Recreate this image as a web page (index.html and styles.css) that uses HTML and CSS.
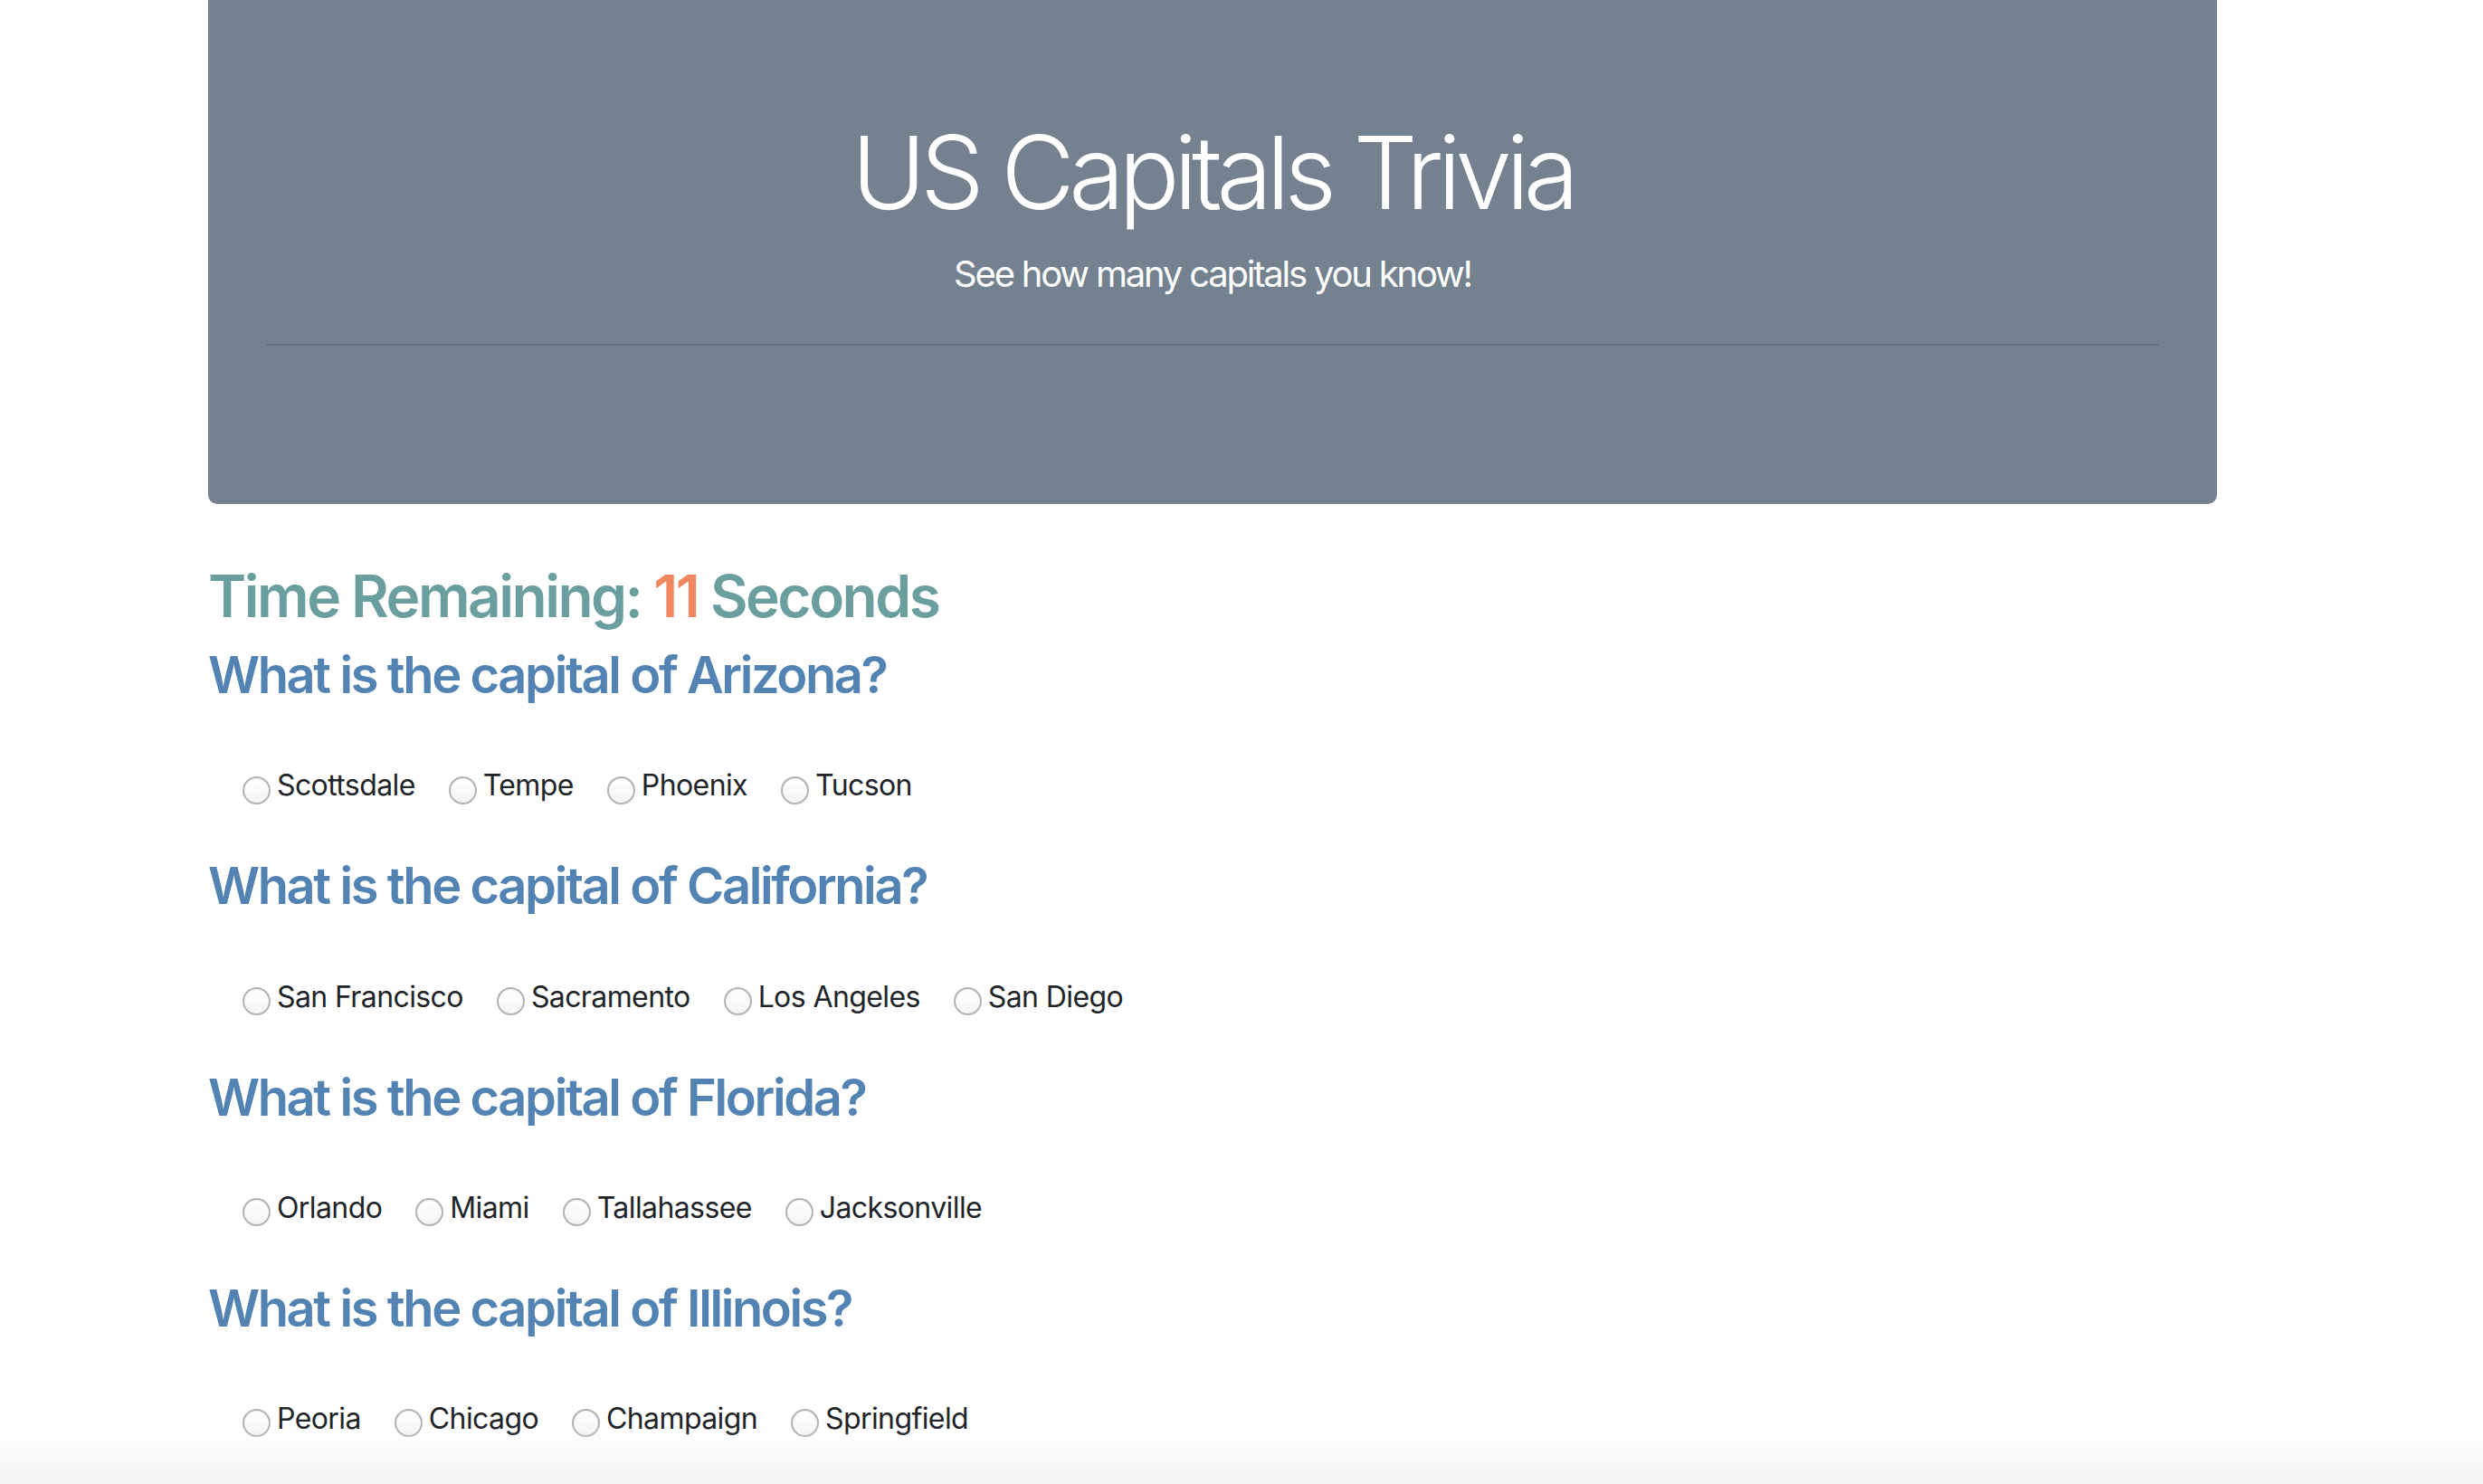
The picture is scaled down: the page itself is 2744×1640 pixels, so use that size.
FILE: index.html
```html
<!DOCTYPE html>
<html lang="en">
<head>
<meta charset="utf-8">
<title>US Capitals Trivia</title>
<link rel="stylesheet" href="styles.css">
</head>
<body>
<div class="container">
  <header class="jumbotron">
    <h1 class="title">US Capitals Trivia</h1>
    <p class="lead">See how many capitals you know!</p>
    <hr class="divider">
  </header>

  <h2 class="timer">Time Remaining: <span class="count">11</span> Seconds</h2>

  <section class="question">
    <h3 class="prompt">What is the capital of Arizona?</h3>
    <div class="options">
      <label class="option"><input type="radio" name="q1"><span>Scottsdale</span></label>
      <label class="option"><input type="radio" name="q1"><span>Tempe</span></label>
      <label class="option"><input type="radio" name="q1"><span>Phoenix</span></label>
      <label class="option"><input type="radio" name="q1"><span>Tucson</span></label>
    </div>
  </section>

  <section class="question">
    <h3 class="prompt">What is the capital of California?</h3>
    <div class="options">
      <label class="option"><input type="radio" name="q2"><span>San Francisco</span></label>
      <label class="option"><input type="radio" name="q2"><span>Sacramento</span></label>
      <label class="option"><input type="radio" name="q2"><span>Los Angeles</span></label>
      <label class="option"><input type="radio" name="q2"><span>San Diego</span></label>
    </div>
  </section>

  <section class="question">
    <h3 class="prompt">What is the capital of Florida?</h3>
    <div class="options">
      <label class="option"><input type="radio" name="q3"><span>Orlando</span></label>
      <label class="option"><input type="radio" name="q3"><span>Miami</span></label>
      <label class="option"><input type="radio" name="q3"><span>Tallahassee</span></label>
      <label class="option"><input type="radio" name="q3"><span>Jacksonville</span></label>
    </div>
  </section>

  <section class="question">
    <h3 class="prompt">What is the capital of Illinois?</h3>
    <div class="options">
      <label class="option"><input type="radio" name="q4"><span>Peoria</span></label>
      <label class="option"><input type="radio" name="q4"><span>Chicago</span></label>
      <label class="option"><input type="radio" name="q4"><span>Champaign</span></label>
      <label class="option"><input type="radio" name="q4"><span>Springfield</span></label>
    </div>
  </section>
</div>
<div class="bottom-fade"></div>
</body>
</html>
```
FILE: styles.css
```css
html, body {
  margin: 0;
  padding: 0;
  background: #ffffff;
}

body {
  font-family: "Inter", "Noto Sans", "Liberation Sans", sans-serif;
  color: #212529;
  font-size: 32px;
  line-height: 1.5;
  overflow: hidden;
}

.container {
  margin-left: 230px;
  width: 2220px;
}

.jumbotron {
  background: #74818e;
  border-radius: 0 0 10px 10px;
  padding: 123px 64px 128px;
  text-align: center;
  color: #ffffff;
  margin-bottom: 64px;
}

.title {
  margin: 0 0 16px;
  font-size: 112px;
  font-weight: 300;
  line-height: 1.2;
  letter-spacing: -6.5px;
}

.lead {
  margin: 0;
  font-size: 40px;
  font-weight: 400;
  line-height: 1.5;
  letter-spacing: -2.2px;
}

.divider {
  margin: 47px 0;
  border: 0;
  border-top: 2px solid rgba(0, 0, 0, 0.1);
  height: 0;
}

.timer {
  margin: 0 0 15px;
  font-size: 64px;
  font-weight: 600;
  line-height: 1.2;
  color: #6b9e9e;
  letter-spacing: -2.5px;
}

.count {
  color: #f0875e;
}

.question {
  margin-bottom: 54px;
}

.prompt {
  margin: 0 0 64px;
  font-size: 56px;
  font-weight: 600;
  line-height: 1.2;
  color: #5283b3;
  letter-spacing: -2.4px;
}

.options {
  display: flex;
  gap: 37px;
  padding-left: 38px;
  height: 48px;
}

.option {
  display: inline-flex;
  align-items: center;
  gap: 7px;
  line-height: 48px;
  letter-spacing: -0.6px;
}

.option input {
  appearance: none;
  -webkit-appearance: none;
  margin: 10px 0 0;
  width: 31px;
  height: 31px;
  border-radius: 50%;
  border: 2px solid #b3b3b3;
  background: linear-gradient(#ffffff, #f4f4f4);
  box-shadow: inset 0 1px 1px rgba(0, 0, 0, 0.06);
  box-sizing: border-box;
  flex: none;
}

.bottom-fade {
  position: fixed;
  left: 0;
  right: 0;
  bottom: 0;
  height: 60px;
  background: linear-gradient(rgba(243, 243, 243, 0), #f3f3f3);
  pointer-events: none;
}
```
